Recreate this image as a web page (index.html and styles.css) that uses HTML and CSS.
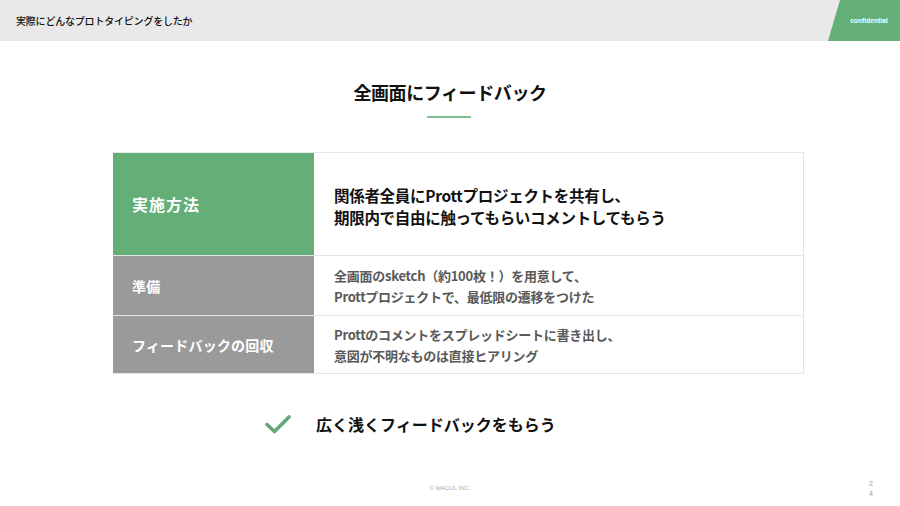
FILE: index.html
```html
<!DOCTYPE html>
<html lang="ja">
<head>
<meta charset="utf-8">
<link rel="stylesheet" href="styles.css">
</head>
<body>
<div class="page">
  <header class="topbar">
    <div class="topbar-title">実際にどんなプロトタイピングをしたか</div>
    <div class="badge"><span>confidential</span></div>
  </header>

  <h1 class="title">全画面にフィードバック</h1>
  <div class="rule"></div>

  <div class="table">
    <div class="cell label label-main">実施方法</div>
    <div class="cell body body-main">関係者全員にProttプロジェクトを共有し、<br>期限内で自由に触ってもらいコメントしてもらう</div>
    <div class="cell label label-sub row2">準備</div>
    <div class="cell body body-sub row2">全画面のsketch（約100枚！）を用意して、<br>Prottプロジェクトで、最低限の遷移をつけた</div>
    <div class="cell label label-sub row3">フィードバックの回収</div>
    <div class="cell body body-sub row3">Prottのコメントをスプレッドシートに書き出し、<br>意図が不明なものは直接ヒアリング</div>
  </div>

  <div class="point">
    <svg class="check" width="26" height="20" viewBox="0 0 26 20"><path d="M2 10.5 L9.5 17.5 L24 3" fill="none" stroke="#63a878" stroke-width="3.6" stroke-linecap="round" stroke-linejoin="round"/></svg>
    <span class="point-text">広く浅くフィードバックをもらう</span>
  </div>

  <footer class="footer">
    <div></div>
    <div class="copy">© WACUL INC.</div>
    <div class="pageno">2<br>4</div>
  </footer>
</div>
</body>
</html>
```

FILE: styles.css
```css
* { box-sizing: border-box; }
html, body { margin: 0; padding: 0; background: #fff; }
body {
  font-family: "Noto Sans CJK JP", "Noto Sans", "Liberation Sans", sans-serif;
  color: #111;
}
.page {
  width: 900px;
  height: 506px;
  display: flex;
  flex-direction: column;
  overflow: hidden;
}
.topbar {
  height: 41px;
  background: #e9e9e9;
  display: flex;
  align-items: center;
  justify-content: space-between;
  flex: none;
}
.topbar-title {
  padding-left: 16px;
  font-size: 10px;
  font-weight: 500;
  letter-spacing: -0.2px;
  color: #111;
}
.badge {
  align-self: stretch;
  width: 72px;
  background: #64ae78;
  clip-path: polygon(12px 0, 100% 0, 100% 100%, 0 100%);
  display: flex;
  align-items: center;
  justify-content: center;
  padding-left: 10px;
}
.badge span {
  font-family: "Liberation Sans", Arial, sans-serif;
  font-size: 6.5px;
  font-weight: 700;
  color: #fff;
  letter-spacing: 0.1px;
}
.title {
  margin: 38px 0 0;
  text-align: center;
  font-size: 18px;
  line-height: 26px;
  font-weight: 700;
  color: #111;
  letter-spacing: -0.4px;
}
.rule {
  width: 44px;
  height: 2px;
  background: #7fbf92;
  margin: 11px auto 0;
  transform: translateX(-1px);
}
.table {
  margin: 34px 0 0 113px;
  width: 691px;
  display: grid;
  grid-template-columns: 201px 1fr;
  grid-template-rows: 102px 60px 59px;
  border-top: 1px solid #e8e8e8;
}
.cell {
  display: flex;
  align-items: center;
}
.label {
  padding-left: 19px;
  color: #fff;
  font-weight: 700;
}
.label-main {
  background: #64ae77;
  font-size: 16px;
  letter-spacing: 1px;
}
.label-sub {
  background: #9a9a9a;
  font-size: 14px;
  letter-spacing: 0.2px;
}
.row2 { border-top: 1px solid #e4e4e4; }
.row3 { border-top: 1px solid #e4e4e4; border-bottom: 1px solid #e4e4e4; }
.body {
  padding-left: 20px;
  border-right: 1px solid #e4e4e4;
}
.body-main {
  font-size: 15.5px;
  line-height: 22px;
  font-weight: 700;
  color: #111;
  letter-spacing: -0.3px;
  padding-top: 4px;
}
.body-sub {
  font-size: 13px;
  line-height: 21px;
  font-weight: 700;
  color: #595959;
  letter-spacing: -0.25px;
}
.point {
  margin: 37px 0 0 265px;
  display: flex;
  align-items: center;
  height: 26px;
}
.check { flex: none; }
.point-text {
  margin-left: 25px;
  font-size: 16px;
  font-weight: 700;
  color: #111;
  letter-spacing: 0;
}
.footer {
  margin-top: auto;
  height: 36px;
  display: grid;
  grid-template-columns: 1fr auto 1fr;
  align-items: start;
  padding-top: 8px;
}
.copy {
  font-family: "Liberation Sans", Arial, sans-serif;
  font-size: 6px;
  color: #aaa;
  margin-top: 7px;
}
.pageno {
  justify-self: end;
  margin-right: 27px;
  font-family: "Liberation Sans", Arial, sans-serif;
  font-size: 7px;
  line-height: 10px;
  color: #999;
  text-align: center;
  margin-top: 1px;
}
```
